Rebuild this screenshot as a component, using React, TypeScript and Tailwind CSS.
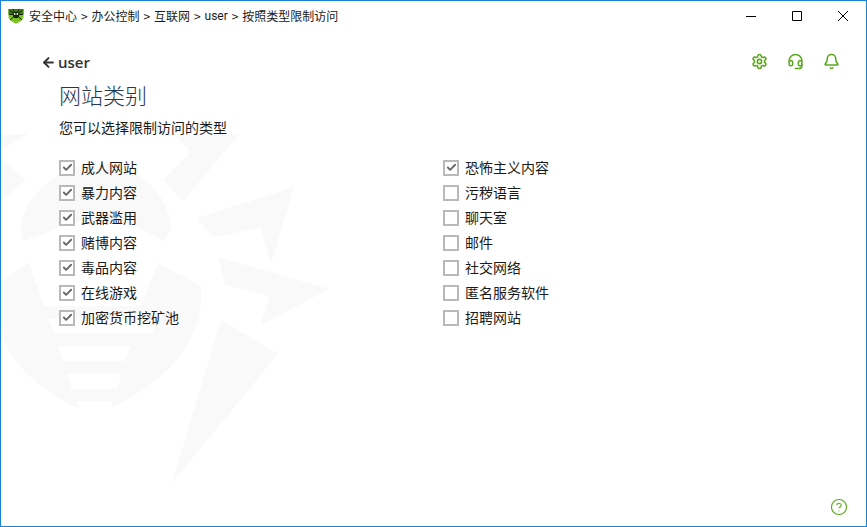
import React from 'react';
import { ArrowLeft, Bell, Check, CircleHelp, Headset, Settings } from 'lucide-react';

const leftItems = [
  { label: '成人网站', checked: true },
  { label: '暴力内容', checked: true },
  { label: '武器滥用', checked: true },
  { label: '赌博内容', checked: true },
  { label: '毒品内容', checked: true },
  { label: '在线游戏', checked: true },
  { label: '加密货币挖矿池', checked: true },
];

const rightItems = [
  { label: '恐怖主义内容', checked: true },
  { label: '污秽语言', checked: false },
  { label: '聊天室', checked: false },
  { label: '邮件', checked: false },
  { label: '社交网络', checked: false },
  { label: '匿名服务软件', checked: false },
  { label: '招聘网站', checked: false },
];

const crumbs = ['安全中心', '办公控制', '互联网', 'user', '按照类型限制访问'];

const cjk = "font-['Noto_Sans_CJK_SC','Liberation_Sans',sans-serif]";

const Logo = () => (
  <svg width="16" height="16" viewBox="0 0 16 16" className="shrink-0">
    <path d="M.5 1h15v7.500c0 3.500-3.500 5.500-7.500 7-4-1.500-7.500-3.500-7.500-7z" fill="#7cc51f" />
    <path d="M.5 1h15v5.500H.5z" fill="#3d7a14" />
    <circle cx="8" cy="7" r="3.200" fill="#14260a" />
    <path d="M2 2.500l3 2.500M14 2.500l-3 2.500M1 6.500h4M15 6.500h-4M2 12l3.500-3M14 12l-3.500-3M5 1.500l1.500 3M11 1.500l-1.500 3" stroke="#14260a" strokeWidth="1" fill="none" />
    <circle cx="6.700" cy="6" r="0.900" fill="#e8f5d0" />
    <circle cx="9.300" cy="6" r="0.900" fill="#e8f5d0" />
  </svg>
);

const Watermark = () => (
  <svg width="340" height="407" viewBox="0 0 340 407" className="absolute left-0 top-[120px]" fill="#f9f9f9">
    <path d="M0 14L27 13 0 29z" />
    <path d="M0 38L25 59 0 80z" />
    <path d="M172 13L238 13 182 80 162 59 190 31z" />
    <path d="M20 108C22 72 60 46 95 42 130 42 168 68 170 108L163 120 140 108C110 96 70 96 46 112L22 120z" />
    <path d="M196 97L293 66 270 142 260 107 212 116z" />
    <path d="M217 136L328 168 260 204 268 175 224 164z" />
    <path d="M0 160L28 142 43 185H140L157 142 200 165C203 215 175 255 110 287L112 280H76L77 287C45 272 0 240 0 200z" />
    <path d="M220 199L277 233 171 362z" />
    <path d="M47 198h110l-6 14H53z" fill="#ffffff" />
    <path d="M57 225h73l-6 15H62z" fill="#ffffff" />
    <path d="M66 253h55l-5 15H71z" fill="#ffffff" />
  </svg>
);

const CheckRow = ({ label, checked }: { label: string; checked: boolean }) => (
  <div className="flex h-[25px] items-center">
    <div className="mt-[2px] flex h-4 w-4 items-center justify-center border-2 border-[#b9b9b9] bg-white">
      {checked && <Check size={11} strokeWidth={4} className="text-[#666666]" />}
    </div>
    <span className="ml-[6px] text-sm text-[#1a1a1a]">{label}</span>
  </div>
);

const App = () => {
  return (
    <div className={`relative flex h-[527px] w-[867px] flex-col overflow-hidden border border-[#1583d8] bg-white ${cjk}`}>
      <Watermark />

      {/* Title bar */}
      <div className="relative flex h-[30px] items-center pl-[7px]">
        <Logo />
        <div className="ml-[5px] flex items-center text-xs text-[#1a1a1a]">
          {crumbs.map((crumb, i) => (
            <React.Fragment key={crumb}>
              {i > 0 && <span className="w-[14.5px] text-center">&gt;</span>}
              <span className={crumb === 'user' ? "font-['Roboto',sans-serif]" : ''}>{crumb}</span>
            </React.Fragment>
          ))}
        </div>
        <div className="ml-auto flex items-center">
          <button className="flex h-[30px] w-[46px] items-center justify-center">
            <svg width="10" height="10" viewBox="0 0 10 10"><path d="M0 5.500h10" stroke="#000" fill="none" /></svg>
          </button>
          <button className="flex h-[30px] w-[46px] items-center justify-center">
            <svg width="10" height="10" viewBox="0 0 10 10"><path d="M.5.500h9v9h-9z" stroke="#000" fill="none" /></svg>
          </button>
          <button className="flex h-[30px] w-[46px] items-center justify-center">
            <svg width="10" height="10" viewBox="0 0 10 10"><path d="M0 0l10 10M10 0L0 10" stroke="#000" fill="none" /></svg>
          </button>
        </div>
      </div>

      {/* Content */}
      <div className="relative flex flex-1 flex-col pl-[42px]">
        <div className="mt-[20px] flex h-[24px] items-center pr-[26px] text-[#333333]">
          <ArrowLeft size={15} strokeWidth={3.2} className="-ml-[2px] mb-[2px]" />
          <span className="mb-[2px] ml-[2px] font-['Open_Sans',sans-serif] text-[15px] font-semibold">user</span>
          <div className="mb-[4px] ml-auto flex items-center gap-[19px] text-[#5aa81e]">
            <Settings size={17} strokeWidth={2.2} />
            <Headset size={17} strokeWidth={2.2} />
            <Bell size={17} strokeWidth={2.2} />
          </div>
        </div>
        <div className="pl-[16px]">
          <h1 className="mt-[3px] text-[22px] font-light leading-[32px] text-[#1f3a52]">网站类别</h1>
          <p className="mt-[7px] text-sm leading-[20px] text-[#1a1a1a]">您可以选择限制访问的类型</p>
          <div className="mt-[17px] grid w-[768px] grid-cols-2">
            <div>
              {leftItems.map((item) => (
                <CheckRow key={item.label} {...item} />
              ))}
            </div>
            <div>
              {rightItems.map((item) => (
                <CheckRow key={item.label} {...item} />
              ))}
            </div>
          </div>
        </div>
        <div className="mt-auto flex justify-end pb-[10px] pr-[18px] text-[#5aa81e]">
          <CircleHelp size={18} strokeWidth={1.5} />
        </div>
      </div>
    </div>
  );
};

export default App;
